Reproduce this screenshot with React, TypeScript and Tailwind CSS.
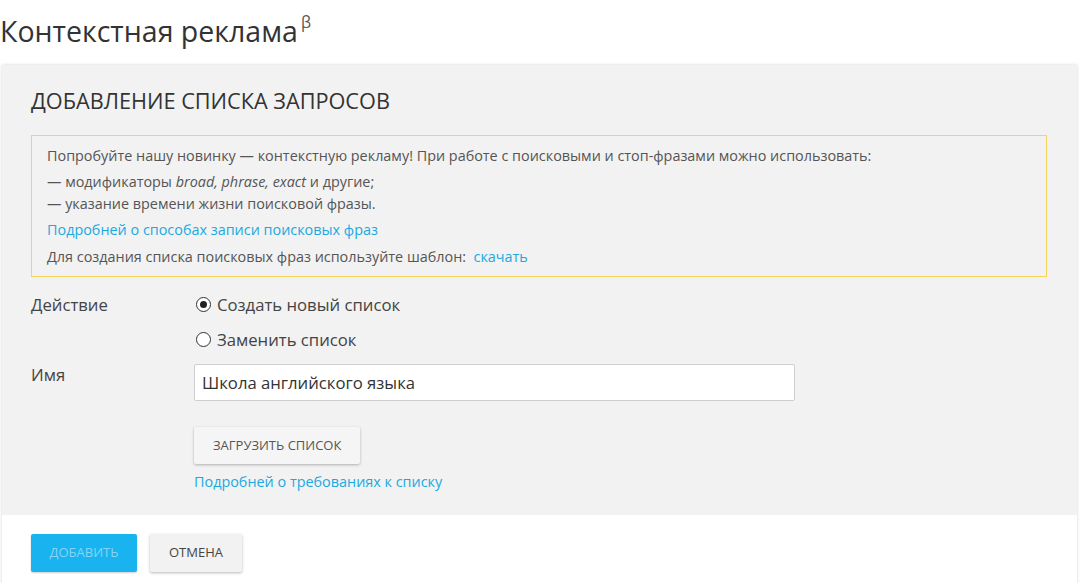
export default function App() {
  const font = { fontFamily: '"Open Sans", "Noto Sans", sans-serif' };
  return (
    <div className="w-[1080px] h-[583px] overflow-hidden bg-white text-[#333]" style={font}>
      <div className="h-[65px] pt-[12px]">
        <h1 className="text-[28.5px] leading-[38px] font-normal text-[#333] flex items-start">
          <span>Контекстная реклама</span>
          <span className="text-[16px] leading-[16px] mt-[2px] ml-[3px] text-[#555]">β</span>
        </h1>
      </div>
      <div className="ml-[2px] mr-[3px] bg-[#f2f2f2] shadow-[0_0_3px_rgba(0,0,0,0.18)]">
        <div className="px-[29px] pt-[22px] pb-[23px]">
          <h2 className="text-[21.7px] leading-[28px] font-normal text-[#333] uppercase">Добавление списка запросов</h2>
          <div className="mt-[20px] mr-[1px] border border-[#f3d55b] px-[15px] pt-[9px] pb-[8px] text-[14.4px] leading-[22px] text-[#555]">
            <p>Попробуйте нашу новинку — контекстную рекламу! При работе с поисковыми и стоп-фразами можно использовать:</p>
            <p className="mt-[4px]">— модификаторы <i>broad, phrase, exact</i> и другие;<br />— указание времени жизни поисковой фразы.</p>
            <p className="mt-[4px]"><a className="text-[#1ba9e1]">Подробней о способах записи поисковых фраз</a></p>
            <p className="mt-[5px]">Для создания списка поисковых фраз используйте шаблон:&nbsp; <a className="text-[#1ba9e1]">скачать</a></p>
          </div>
          <div className="mt-[10px] grid grid-cols-[163px_1fr] text-[16.7px] text-[#444]">
            <div className="h-[35px] flex items-center">Действие</div>
            <div>
              <label className="h-[35px] flex items-center">
                <span className="ml-[2px] w-[15px] h-[15px] rounded-full border-[1.5px] border-[#333] flex items-center justify-center bg-white">
                  <span className="w-[7px] h-[7px] rounded-full bg-[#222]"></span>
                </span>
                <span className="ml-[6px]">Создать новый список</span>
              </label>
              <label className="h-[35px] flex items-center">
                <span className="ml-[2px] w-[15px] h-[15px] rounded-full border-[1.5px] border-[#333] bg-white"></span>
                <span className="ml-[6px]">Заменить список</span>
              </label>
            </div>
            <div className="mt-[7px] leading-[22px]">Имя</div>
            <div className="mt-[7px]">
              <div className="w-[601px] h-[37px] bg-white border border-[#cfcfcf] rounded-[2px] flex items-center px-[7px] text-[#333]">
                Школа английского языка
              </div>
              <button className="mt-[26px] h-[37px] px-[19px] bg-[#f5f5f5] rounded-[2px] shadow-[0_1px_3px_rgba(0,0,0,0.28)] text-[13px] uppercase text-[#555]">
                Загрузить список
              </button>
              <div className="mt-[8px] text-[14.4px] leading-[20px]">
                <a className="text-[#1ba9e1]">Подробней о требованиях к списку</a>
              </div>
            </div>
          </div>
        </div>
        <div className="bg-white px-[29px] pt-[19px] pb-[30px] flex gap-[13px]">
          <button className="h-[38px] w-[106px] bg-[#19b3ef] rounded-[2px] shadow-[0_1px_2px_rgba(0,0,0,0.2)] text-[13px] uppercase text-[#86d4f5]">
            Добавить
          </button>
          <button className="h-[38px] w-[92px] bg-[#f2f2f2] rounded-[2px] shadow-[0_1px_3px_rgba(0,0,0,0.28)] text-[13px] uppercase text-[#444]">
            Отмена
          </button>
        </div>
      </div>
    </div>
  );
}
